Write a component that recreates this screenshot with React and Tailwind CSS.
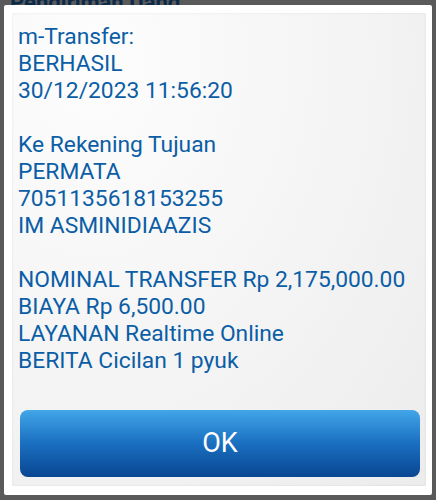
export default function App() {
  const lines = [
    ['m-Transfer:', 'BERHASIL', '30/12/2023 11:56:20'],
    ['Ke Rekening Tujuan', 'PERMATA', '7051135618153255', 'IM ASMINIDIAAZIS'],
    ['NOMINAL TRANSFER Rp 2,175,000.00', 'BIAYA Rp 6,500.00', 'LAYANAN Realtime Online', 'BERITA Cicilan 1 pyuk'],
  ];

  return (
    <div className="relative w-[436px] h-[500px] overflow-hidden bg-[#5a5a5a] font-['Roboto',sans-serif]">
      {/* page behind the dialog, dimmed */}
      <div className="absolute left-[10px] -top-[14px] text-[22px] font-bold text-[#0b2a4a]">Pengiriman Uang</div>

      <div className="absolute left-[4px] top-[5px] w-[428px] h-[490px] bg-white rounded-[2px] p-[8px] pb-[9px] pr-[6px]">
        <div className="h-full flex flex-col rounded-[2px] bg-[radial-gradient(ellipse_at_20%_10%,#fdfdfd_0%,#f3f3f3_60%,#ececec_100%)] shadow-[inset_0_0_3px_rgba(0,0,0,0.08)]">
          <div className="flex-1 pl-[6px] pt-[10px] flex flex-col gap-[27px] text-[22.8px] leading-[27px] text-[#0b5ea6]">
            {lines.map((group, i) => (
              <div key={i}>
                {group.map((t) => (
                  <div key={t}>{t}</div>
                ))}
              </div>
            ))}
          </div>
          <div className="px-[8px] pr-[6px] pb-[9px]">
            <button className="w-full h-[67px] rounded-[8px] bg-gradient-to-b from-[#42a6e8] via-[#1a6fc0] to-[#0a4692] text-white text-[27px] flex items-center justify-center">
              OK
            </button>
          </div>
        </div>
      </div>
    </div>
  );
}
